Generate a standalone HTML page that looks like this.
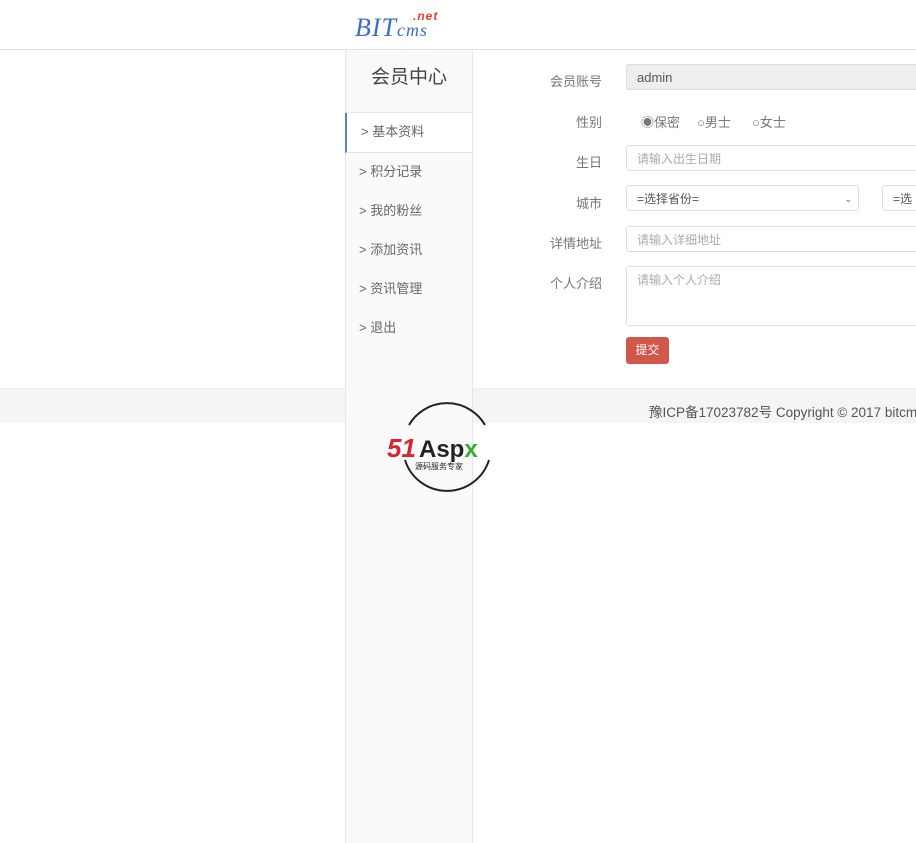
<!DOCTYPE html>
<html><head><meta charset="utf-8"><style>
body{margin:0;width:916px;height:843px;overflow:hidden;background:#fff;font-family:"Liberation Sans","Noto Sans CJK SC",sans-serif;position:relative}
.hdr{position:absolute;left:0;top:0;width:916px;height:49px;border-bottom:1px solid #e3e3e3;background:#fff}
.logo{position:absolute;left:355px;top:13px;font-style:italic;color:#3a6fc4;font-size:26px;font-family:"Liberation Serif",serif;letter-spacing:1px}
.logo small{font-size:18px}
.logo i{position:absolute;left:58px;top:-4px;color:#d9452b;font-size:12px;font-family:"Liberation Sans",sans-serif;font-weight:bold}
.foot{position:absolute;left:0;top:388px;width:916px;height:34px;background:#f5f5f5;border-top:1px solid #eee}
.foot span{position:absolute;left:649px;top:12px;font-size:13.5px;color:#555;white-space:nowrap}
.side{position:absolute;left:345px;top:50px;width:126px;height:793px;background:#fafafa;border-left:1px solid #e6e6e6;border-right:1px solid #e6e6e6}
.side h2{margin:0;height:62px;border-bottom:1px solid #e6e6e6;font-weight:normal;font-size:19px;color:#444;text-align:center;line-height:56px;background:#f9f9f9}
.side div{height:39px;line-height:38px;padding-left:13px;font-size:13px;color:#666}
.side div.a{background:#fff;border-left:2px solid #5b7fbf;padding-left:14px;border-bottom:1px solid #e6e6e6;margin-left:-1px}
.lbl{position:absolute;width:100px;left:502px;text-align:right;font-size:13px;color:#777}
.inp{position:absolute;left:626px;height:26px;border:1px solid #ddd;border-radius:3px;border-right:none;font-size:12px;color:#aaa;padding-left:10px;line-height:26px;box-sizing:border-box;width:300px}
.r{position:absolute;top:112px;font-size:13px;color:#777}
</style></head><body>
<div class="hdr"><div class="logo">BIT<small>cms</small><i>.net</i></div></div>
<div class="foot"><span>豫ICP备17023782号 Copyright © 2017 bitcms</span></div>
<div class="side"><h2>会员中心</h2>
<div class="a">&gt; 基本资料</div><div>&gt; 积分记录</div><div>&gt; 我的粉丝</div><div>&gt; 添加资讯</div><div>&gt; 资讯管理</div><div>&gt; 退出</div></div>
<div class="lbl" style="top:71px">会员账号</div>
<div class="inp" style="top:64px;background:#eee;color:#555;font-size:13px">admin</div>
<div class="lbl" style="top:112px">性别</div>
<span class="r" style="left:641px">◉保密</span><span class="r" style="left:697px">○男士</span><span class="r" style="left:752px">○女士</span>
<div class="lbl" style="top:152px">生日</div>
<div class="inp" style="top:145px">请输入出生日期</div>
<div class="lbl" style="top:193px">城市</div>
<div class="inp" style="top:185px;width:233px;border-right:1px solid #ddd;color:#555">=选择省份=<span style="position:absolute;right:6px;font-size:9px">⌄</span></div>
<div class="inp" style="top:185px;left:882px;width:60px;color:#555">=选</div>
<div class="lbl" style="top:233px">详情地址</div>
<div class="inp" style="top:226px">请输入详细地址</div>
<div class="lbl" style="top:273px">个人介绍</div>
<div class="inp" style="top:266px;height:60px;line-height:26px">请输入个人介绍</div>
<div style="position:absolute;left:626px;top:337px;width:43px;height:27px;background:#d0574a;border-radius:3px;color:#fff;font-size:12px;text-align:center;line-height:27px">提交</div>
<svg style="position:absolute;left:386px;top:400px" width="128" height="96">
<path d="M23 25 A44 44 0 0 1 99 25" fill="none" stroke="#222" stroke-width="2"/>
<path d="M103 60 A44 44 0 0 1 19 60" fill="none" stroke="#222" stroke-width="2"/>
<text x="1" y="57" font-family="Liberation Sans" font-weight="bold" font-style="italic" font-size="26" fill="#d7262e">51</text>
<text x="33" y="57" font-family="Liberation Sans" font-weight="bold" font-size="24" fill="#222">Asp<tspan fill="#3aa935">x</tspan></text>
<text x="29" y="69" font-family="Noto Sans CJK SC" font-size="8" fill="#222">源码服务专家</text>
</svg>
</body></html>
